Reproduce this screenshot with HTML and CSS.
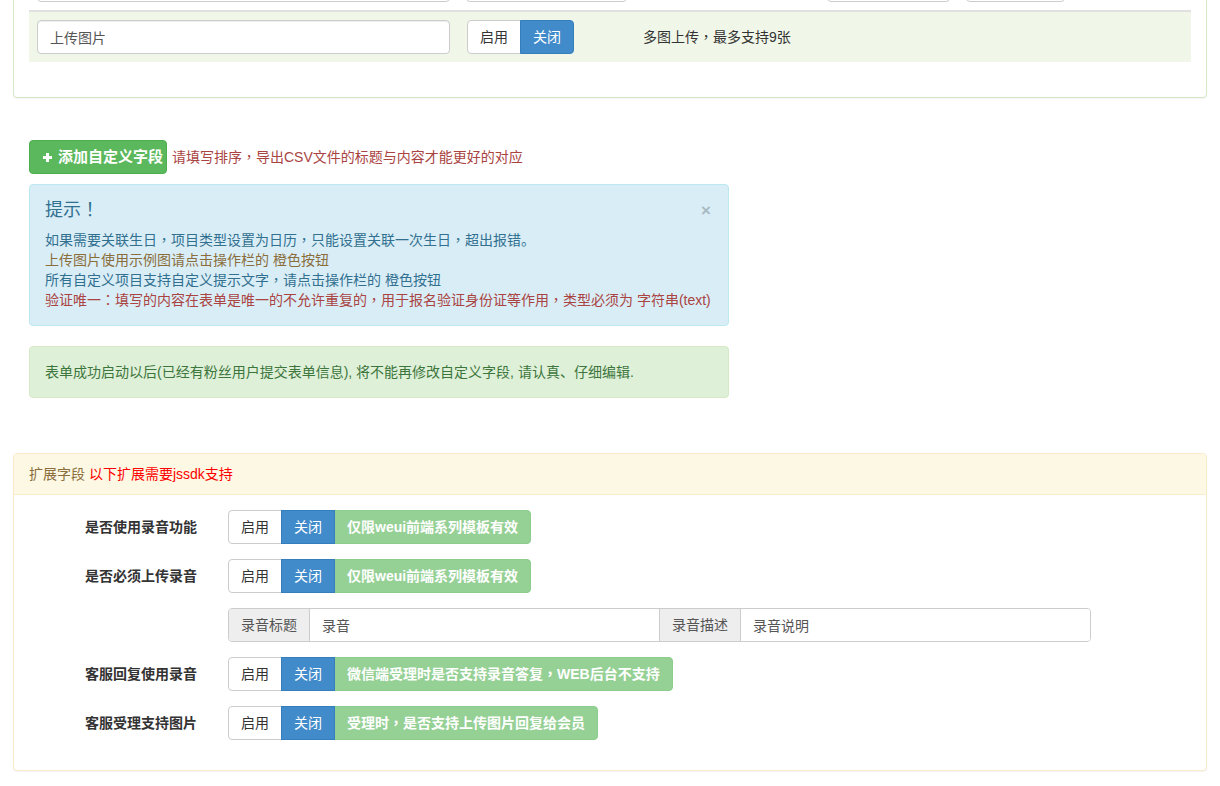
FILE: index.html
```html
<!DOCTYPE html>
<html lang="zh-CN">
<head>
<meta charset="utf-8">
<title>自定义字段</title>
<link rel="stylesheet" href="styles.css">
</head>
<body>
<div class="panel panel-fields">
  <div class="panel-body">
    <table class="field-table">
      <colgroup>
        <col class="c1"><col class="c2"><col class="c3"><col class="c4"><col class="c5"><col class="c6">
      </colgroup>
      <tr class="row-prev">
        <td><input class="form-control" type="text" value="" readonly></td>
        <td><input class="form-control" type="text" value="" readonly></td>
        <td></td>
        <td><input class="form-control" type="text" value="" readonly></td>
        <td><input class="form-control" type="text" value="" readonly></td>
        <td></td>
      </tr>
      <tr class="row-img">
        <td><input class="form-control" type="text" value="上传图片" readonly></td>
        <td>
          <div class="btn-group">
            <span class="btn btn-default">启用</span><span class="btn btn-primary">关闭</span>
          </div>
        </td>
        <td colspan="4" class="note">多图上传<span class="pc" lang="zh-TW">，</span>最多支持9张</td>
      </tr>
    </table>
  </div>
</div>

<div class="content">
  <div class="add-line">
    <button class="btn btn-success btn-add" type="button"><svg class="icon-plus" viewBox="0 0 9 9" width="9" height="9" aria-hidden="true"><rect x="3" y="0" width="3" height="9" fill="#fff"/><rect x="0" y="3" width="9" height="3" fill="#fff"/></svg>添加自定义字段</button>
    <span class="text-danger">请填写排序<span class="pc" lang="zh-TW">，</span>导出CSV文件的标题与内容才能更好的对应</span>
  </div>

  <div class="alert alert-info">
    <div class="alert-head">
      <h4>提示<span class="pc" lang="zh-TW">！</span></h4>
      <span class="close">×</span>
    </div>
    <p>如果需要关联生日<span class="pc" lang="zh-TW">，</span>项目类型设置为日历<span class="pc" lang="zh-TW">，</span>只能设置关联一次生日<span class="pc" lang="zh-TW">，</span>超出报错。</p>
    <p class="text-warning">上传图片使用示例图请点击操作栏的 橙色按钮</p>
    <p>所有自定义项目支持自定义提示文字<span class="pc" lang="zh-TW">，</span>请点击操作栏的 橙色按钮</p>
    <p class="text-danger">验证唯一<span class="pc" lang="zh-TW">：</span>填写的内容在表单是唯一的不允许重复的<span class="pc" lang="zh-TW">，</span>用于报名验证身份证等作用<span class="pc" lang="zh-TW">，</span>类型必须为 字符串(text)</p>
  </div>

  <div class="alert alert-success">表单成功启动以后(已经有粉丝用户提交表单信息), 将不能再修改自定义字段, 请认真、仔细编辑.</div>
</div>

<div class="panel panel-warning">
  <div class="panel-heading">扩展字段 <span class="red">以下扩展需要jssdk支持</span></div>
  <div class="panel-body form-grid">
    <label class="form-label">是否使用录音功能</label>
    <div class="btn-group">
      <span class="btn btn-default">启用</span><span class="btn btn-primary">关闭</span><span class="btn btn-tip">仅限weui前端系列模板有效</span>
    </div>

    <label class="form-label">是否必须上传录音</label>
    <div class="btn-group">
      <span class="btn btn-default">启用</span><span class="btn btn-primary">关闭</span><span class="btn btn-tip">仅限weui前端系列模板有效</span>
    </div>

    <span class="form-label"></span>
    <div class="input-group">
      <span class="addon">录音标题</span><input class="ig-input" type="text" value="录音" readonly><span class="addon">录音描述</span><input class="ig-input" type="text" value="录音说明" readonly>
    </div>

    <label class="form-label">客服回复使用录音</label>
    <div class="btn-group">
      <span class="btn btn-default">启用</span><span class="btn btn-primary">关闭</span><span class="btn btn-tip">微信端受理时是否支持录音答复<span class="pc" lang="zh-TW">，</span>WEB后台不支持</span>
    </div>

    <label class="form-label">客服受理支持图片</label>
    <div class="btn-group">
      <span class="btn btn-default">启用</span><span class="btn btn-primary">关闭</span><span class="btn btn-tip">受理时<span class="pc" lang="zh-TW">，</span>是否支持上传图片回复给会员</span>
    </div>
  </div>
</div>
</body>
</html>
```

FILE: styles.css
```css
* { box-sizing: border-box; }

html, body { background: #fff; }

body {
  margin: 0;
  padding: 0 13px 40px;
  font-family: "Liberation Sans", "Noto Sans CJK SC", sans-serif;
  font-size: 14px;
  line-height: 20px;
  color: #333;
}

input, button {
  font-family: "Liberation Sans", "Noto Sans CJK SC", sans-serif;
}

/* centred full-width punctuation, as in the original font */
.pc {
  font-family: "Noto Sans CJK TC", "Noto Sans CJK SC", sans-serif;
  line-height: 1;
}

/* panels */
.panel {
  background: #fff;
  border: 1px solid #ddd;
  border-radius: 4px;
  box-shadow: 0 1px 1px rgba(0, 0, 0, 0.05);
}

.panel-body {
  padding: 15px;
}

.panel-fields {
  margin-top: -56px;
  border-color: #d6e9c6;
}

.panel-warning {
  border-color: #faebcc;
  margin-top: 55px;
}

.panel-heading {
  padding: 10px 15px;
  background: #fcf8e3;
  color: #8a6d3b;
  border-bottom: 1px solid #faebcc;
  border-radius: 3px 3px 0 0;
}

.panel-heading .red { color: #ff0000; }

/* table */
.field-table {
  width: 100%;
  border-collapse: collapse;
  table-layout: fixed;
  margin-bottom: 20px;
}

.c1 { width: 429px; }
.c2 { width: 177px; }
.c3 { width: 184px; }
.c4 { width: 139px; }
.c5 { width: 115px; }
.c6 { width: 118px; }

.field-table td {
  padding: 8px;
  vertical-align: middle;
}

.row-img td {
  background: #f0f7e9;
  border-top: 2px solid #e0e0e0;
}

.row-img td:nth-child(2) { padding-left: 9px; }

.note { color: #333; }

.form-control {
  display: block;
  width: 100%;
  height: 34px;
  padding: 6px 12px;
  font-size: 14px;
  line-height: 20px;
  color: #555;
  background: #fff;
  border: 1px solid #ccc;
  border-radius: 4px;
  box-shadow: inset 0 1px 1px rgba(0, 0, 0, 0.075);
  outline: none;
}

/* buttons */
.btn-group {
  display: inline-flex;
  vertical-align: middle;
}

.btn {
  display: inline-block;
  height: 34px;
  padding: 6px 12px;
  font-size: 14px;
  line-height: 20px;
  border: 1px solid transparent;
  white-space: nowrap;
}

.btn-group .btn + .btn { margin-left: -1px; }
.btn-group .btn:first-child { border-radius: 4px 0 0 4px; }
.btn-group .btn:last-child { border-radius: 0 4px 4px 0; }

.btn-default {
  background: #fff;
  border-color: #ccc;
  color: #333;
}

.btn-primary {
  background: #428bca;
  border-color: #357ebd;
  color: #fff;
  position: relative;
}

.btn-tip {
  background: #95d095;
  border-color: #8ccd8c;
  color: #fff;
  font-weight: bold;
}

.btn-success {
  background: #5cb85c;
  border-color: #4cae4c;
  color: #fff;
}

/* content section */
.content {
  padding: 0 16px;
  margin-top: 42px;
}

.add-line {
  display: flex;
  align-items: center;
  gap: 5px;
  color: #a94442;
}

.btn-add {
  display: inline-flex;
  align-items: center;
  gap: 6px;
  width: 138px;
  height: 34px;
  padding: 6px 0 6px 13px;
  font-size: 15px;
  font-weight: bold;
  border-radius: 4px;
  cursor: pointer;
  white-space: nowrap;
}

.icon-plus { display: block; flex: none; }

.text-danger { color: #a94442; }
.text-warning { color: #8a6d3b; }

.alert {
  width: 700px;
  padding: 15px;
  border: 1px solid transparent;
  border-radius: 4px;
}

.alert-info {
  margin-top: 10px;
  background: #d9edf7;
  border-color: #bce8f1;
  color: #31708f;
}

.alert-info .text-danger { color: #a94442; }
.alert-info .text-warning { color: #8a6d3b; }

.alert-success {
  margin-top: 20px;
  background: #dff0d8;
  border-color: #d6e9c6;
  color: #3c763d;
}

.alert-head {
  display: flex;
  justify-content: space-between;
  align-items: flex-end;
  height: 20px;
  margin-bottom: 10px;
}

.alert h4 {
  margin: 0;
  font-size: 18px;
  line-height: 20px;
  font-weight: normal;
}

.close {
  font-size: 17px;
  font-weight: bold;
  line-height: 18px;
  color: #a9bac3;
  margin-right: 2px;
}

.alert p { margin: 0; }

/* extension form */
.form-grid {
  display: grid;
  grid-template-columns: 168px 863px;
  column-gap: 31px;
  row-gap: 15px;
  padding-bottom: 30px;
}

.form-label {
  display: flex;
  align-items: center;
  justify-content: flex-end;
  height: 34px;
  font-weight: bold;
  color: #333;
}

.form-grid .btn-group {
  justify-self: start;
}

.input-group {
  display: flex;
  height: 34px;
  border: 1px solid #ccc;
  border-radius: 4px;
  overflow: hidden;
  box-shadow: inset 0 1px 1px rgba(0, 0, 0, 0.075);
}

.addon {
  flex: none;
  padding: 6px 12px;
  background: #eee;
  color: #555;
  line-height: 20px;
  border-right: 1px solid #ccc;
}

.ig-input + .addon { border-left: 1px solid #ccc; }

.ig-input {
  flex: 1 1 0;
  min-width: 0;
  height: 32px;
  padding: 6px 12px;
  font-size: 14px;
  line-height: 20px;
  color: #555;
  border: 0;
  background: #fff;
  outline: none;
}
```
